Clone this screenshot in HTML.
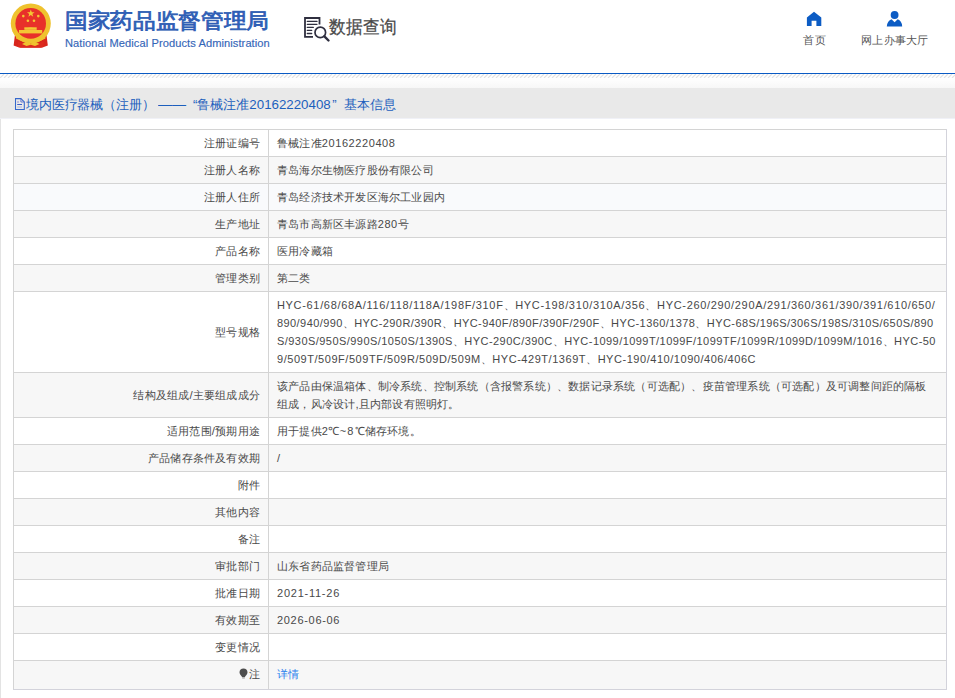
<!DOCTYPE html>
<html><head><meta charset="utf-8">
<style>
*{margin:0;padding:0;box-sizing:border-box}
html,body{width:955px;height:698px;overflow:hidden;background:#fff;font-family:"Liberation Sans",sans-serif;}
.abs{position:absolute;white-space:nowrap}
.emb{left:10px;top:3px;width:41px;height:45px}
.t1{left:65px;top:6px;font-size:21px;font-weight:500;color:#2e5eb5;letter-spacing:0;line-height:30px;-webkit-text-stroke:0.8px #2e5eb5;transform:scaleX(1.08);transform-origin:0 0}
.t2{left:65px;top:36px;font-size:11.1px;color:#3566b8;line-height:14px;letter-spacing:0.08px;-webkit-text-stroke:0.15px #3566b8}
.sq{left:300px;top:14px;width:32px;height:30px}
.sqt{left:329px;top:15px;font-size:17px;color:#4a4a4a;line-height:26px;transform:scaleY(1.08);transform-origin:0 50%;-webkit-text-stroke:0.25px #4a4a4a}
.navt{font-size:11.2px;color:#555;line-height:14px}
.bl{left:0;top:73px;width:955px;height:1px;background:#0b5bc4}
.grad{left:0;top:78px;width:955px;height:10px;background:linear-gradient(#fff,#f7f7f7)}
.bar{left:0;top:88px;width:955px;height:30px;background:#e9e9e9}
.barline{left:0;top:118px;width:955px;height:1px;background:#f0f1f7}
.bart{left:26px;top:96px;font-size:13px;color:#1c5fbd;line-height:18px}
.panel{left:0;top:119px;width:1px;height:579px;background:#e3e3e3}
table{position:absolute;left:13px;top:129px;width:934px;border-collapse:collapse;table-layout:fixed;font-size:11.4px;color:#494949;letter-spacing:0.2px}
td{border:1px solid #d4d4d4;padding:4px 0;line-height:18px;vertical-align:middle;white-space:nowrap;overflow:hidden}
td.l{text-align:right;padding-right:8px}
td.v{padding-left:8px}
tr:nth-child(even) td{background:#f7f7f7}
tr.hv td{background:#f9fafc}
.n{font-size:11px;letter-spacing:0.5px;color:#484848}
a{color:#2b82ee;text-decoration:none}
</style></head><body>
<svg class="abs" style="left:5px;top:0" width="50" height="50" viewBox="0 0 50 50">
  <path d="M10.5 31 L8.6 45.5 L14 47.6 L37.5 47.6 L42.8 45.5 L41 31 Z" fill="#d8261c"/>
  <circle cx="25.8" cy="23.6" r="20" fill="#efc22e"/>
  <circle cx="25.7" cy="23.4" r="15.3" fill="#e8302a"/>
  <polygon points="25.8,9.6 26.8,12.2 29.6,12.3 27.4,14 28.2,16.7 25.8,15.1 23.4,16.7 24.2,14 22,12.3 24.8,12.2" fill="#f4c634"/>
  <circle cx="18.3" cy="16.1" r="1.3" fill="#f4c634"/><circle cx="33.3" cy="16.1" r="1.3" fill="#f4c634"/>
  <circle cx="22.9" cy="20.8" r="1.3" fill="#f4c634"/><circle cx="29" cy="20.8" r="1.3" fill="#f4c634"/>
  <path d="M19.5 29.6 Q25.8 25.6 32 29.6 Z" fill="#f4c634"/>
  <rect x="19.3" y="27.3" width="12.4" height="2.4" fill="#f4c634"/>
  <rect x="14" y="30" width="23.2" height="3.4" fill="#f4c634"/>
  <path d="M11.5 35 Q25.8 44 40 35 L40.5 38.5 Q25.8 47 11 38.5 Z" fill="#efc22e"/>
  <path d="M13 41.5 Q25.8 48 38.5 41.5 L39 46.5 L36 47.8 L15.5 47.8 L12.5 46.5 Z" fill="#dc2a1e"/>
  <path d="M17 44 L22 41.5 L25.8 43.5 L29.5 41.5 L34.5 44 L30 46 L25.8 44.8 L21.5 46 Z" fill="#f0c22e"/>
</svg>
<div class="abs t1">国家药品监督管理局</div>
<div class="abs t2">National Medical Products Administration</div>
<svg class="abs" style="left:300px;top:12px" width="32" height="32" viewBox="0 0 32 32">
  <path d="M19.5 12.6 V6 H5 V24.9 H13" fill="none" stroke="#2f2f3f" stroke-width="1.8"/>
  <path d="M7.3 9.4 H17 M7.3 12.3 H17 M7.3 15.4 H13.3 M7.3 18.4 H11.7 M7.3 21.5 H11.7" stroke="#2f2f3f" stroke-width="1.3" stroke-linecap="round"/>
  <circle cx="20.3" cy="20.4" r="5.3" fill="#fff" stroke="#2f2f3f" stroke-width="1.7"/>
  <path d="M24.4 24.4 L28.5 28.5" stroke="#2f2f3f" stroke-width="2.4" stroke-linecap="round"/>
</svg>
<div class="abs sqt">数据查询</div>
<svg class="abs" style="left:806px;top:11px" width="16" height="16" viewBox="0 0 16 16"><path d="M8 0.8 L15.3 6.5 V15 H10.4 V9.8 H5.6 V15 H0.9 V6.5 Z" fill="#0c5cc4"/></svg>
<div class="abs navt" style="left:803px;top:33px;letter-spacing:0.9px">首页</div>
<svg class="abs" style="left:886px;top:10px" width="17" height="17" viewBox="0 0 17 17"><circle cx="8.6" cy="5" r="3.9" fill="#0c5cc4"/><path d="M0.8 16.4 Q1.5 10.5 5.5 9.3 L8.6 12.2 L11.7 9.3 Q15.7 10.5 16.2 16.4 Z" fill="#0c5cc4"/></svg>
<div class="abs navt" style="left:861px;top:33px;letter-spacing:0.25px">网上办事大厅</div>
<div class="abs bl"></div>
<svg class="abs" style="left:0;top:74px" width="955" height="4"><path d="M-4 4L0 0M0 4L4 0M4 4L8 0M8 4L12 0M12 4L16 0M16 4L20 0M20 4L24 0M24 4L28 0M28 4L32 0M32 4L36 0M36 4L40 0M40 4L44 0M44 4L48 0M48 4L52 0M52 4L56 0M56 4L60 0M60 4L64 0M64 4L68 0M68 4L72 0M72 4L76 0M76 4L80 0M80 4L84 0M84 4L88 0M88 4L92 0M92 4L96 0M96 4L100 0M100 4L104 0M104 4L108 0M108 4L112 0M112 4L116 0M116 4L120 0M120 4L124 0M124 4L128 0M128 4L132 0M132 4L136 0M136 4L140 0M140 4L144 0M144 4L148 0M148 4L152 0M152 4L156 0M156 4L160 0M160 4L164 0M164 4L168 0M168 4L172 0M172 4L176 0M176 4L180 0M180 4L184 0M184 4L188 0M188 4L192 0M192 4L196 0M196 4L200 0M200 4L204 0M204 4L208 0M208 4L212 0M212 4L216 0M216 4L220 0M220 4L224 0M224 4L228 0M228 4L232 0M232 4L236 0M236 4L240 0M240 4L244 0M244 4L248 0M248 4L252 0M252 4L256 0M256 4L260 0M260 4L264 0M264 4L268 0M268 4L272 0M272 4L276 0M276 4L280 0M280 4L284 0M284 4L288 0M288 4L292 0M292 4L296 0M296 4L300 0M300 4L304 0M304 4L308 0M308 4L312 0M312 4L316 0M316 4L320 0M320 4L324 0M324 4L328 0M328 4L332 0M332 4L336 0M336 4L340 0M340 4L344 0M344 4L348 0M348 4L352 0M352 4L356 0M356 4L360 0M360 4L364 0M364 4L368 0M368 4L372 0M372 4L376 0M376 4L380 0M380 4L384 0M384 4L388 0M388 4L392 0M392 4L396 0M396 4L400 0M400 4L404 0M404 4L408 0M408 4L412 0M412 4L416 0M416 4L420 0M420 4L424 0M424 4L428 0M428 4L432 0M432 4L436 0M436 4L440 0M440 4L444 0M444 4L448 0M448 4L452 0M452 4L456 0M456 4L460 0M460 4L464 0M464 4L468 0M468 4L472 0M472 4L476 0M476 4L480 0M480 4L484 0M484 4L488 0M488 4L492 0M492 4L496 0M496 4L500 0M500 4L504 0M504 4L508 0M508 4L512 0M512 4L516 0M516 4L520 0M520 4L524 0M524 4L528 0M528 4L532 0M532 4L536 0M536 4L540 0M540 4L544 0M544 4L548 0M548 4L552 0M552 4L556 0M556 4L560 0M560 4L564 0M564 4L568 0M568 4L572 0M572 4L576 0M576 4L580 0M580 4L584 0M584 4L588 0M588 4L592 0M592 4L596 0M596 4L600 0M600 4L604 0M604 4L608 0M608 4L612 0M612 4L616 0M616 4L620 0M620 4L624 0M624 4L628 0M628 4L632 0M632 4L636 0M636 4L640 0M640 4L644 0M644 4L648 0M648 4L652 0M652 4L656 0M656 4L660 0M660 4L664 0M664 4L668 0M668 4L672 0M672 4L676 0M676 4L680 0M680 4L684 0M684 4L688 0M688 4L692 0M692 4L696 0M696 4L700 0M700 4L704 0M704 4L708 0M708 4L712 0M712 4L716 0M716 4L720 0M720 4L724 0M724 4L728 0M728 4L732 0M732 4L736 0M736 4L740 0M740 4L744 0M744 4L748 0M748 4L752 0M752 4L756 0M756 4L760 0M760 4L764 0M764 4L768 0M768 4L772 0M772 4L776 0M776 4L780 0M780 4L784 0M784 4L788 0M788 4L792 0M792 4L796 0M796 4L800 0M800 4L804 0M804 4L808 0M808 4L812 0M812 4L816 0M816 4L820 0M820 4L824 0M824 4L828 0M828 4L832 0M832 4L836 0M836 4L840 0M840 4L844 0M844 4L848 0M848 4L852 0M852 4L856 0M856 4L860 0M860 4L864 0M864 4L868 0M868 4L872 0M872 4L876 0M876 4L880 0M880 4L884 0M884 4L888 0M888 4L892 0M892 4L896 0M896 4L900 0M900 4L904 0M904 4L908 0M908 4L912 0M912 4L916 0M916 4L920 0M920 4L924 0M924 4L928 0M928 4L932 0M932 4L936 0M936 4L940 0M940 4L944 0M944 4L948 0M948 4L952 0M952 4L956 0M956 4L960 0" stroke="#e2e2e2" stroke-width="1.15"/></svg>
<div class="abs grad"></div>
<div class="abs bar"></div>
<div class="abs barline"></div>
<svg class="abs" style="left:12px;top:95px" width="16" height="18" viewBox="0 0 16 18"><path d="M3.5 3.6 H8.9 L12.3 7 V14.4 H3.5 Z" fill="none" stroke="#3568cc" stroke-width="1.05"/><path d="M8.9 3.6 V7 H12.3" fill="none" stroke="#5a70cc" stroke-width="0.9"/><path d="M5.2 7 H6.8" stroke="#8078d0" stroke-width="1"/><path d="M5.2 9.5 H10" stroke="#3a5fc8" stroke-width="1"/><path d="M5.2 12 H10" stroke="#a9b3da" stroke-width="1"/></svg>
<div class="abs bart" style="left:26px;letter-spacing:-0.15px">境内医疗器械（注册）</div>
<div class="abs bart" style="left:158px;transform:scaleX(1.08);transform-origin:0 0">——</div>
<div class="abs bart" style="left:193px">“鲁械注准<span style="font-size:13.3px">20162220408</span><span style="margin-left:1.5px">”</span></div>
<div class="abs bart" style="left:344px">基本信息</div>
<div class="abs panel"></div>
<table>
<colgroup><col style="width:255px"><col></colgroup>
<tr><td class="l">注册证编号</td><td class="v">鲁械注准<span class="n" style="letter-spacing:0.58px">20162220408</span></td></tr>
<tr><td class="l">注册人名称</td><td class="v">青岛海尔生物医疗股份有限公司</td></tr>
<tr class="hv"><td class="l">注册人住所</td><td class="v">青岛经济技术开发区海尔工业园内</td></tr>
<tr><td class="l">生产地址</td><td class="v">青岛市高新区丰源路<span class="n">280</span>号</td></tr>
<tr><td class="l">产品名称</td><td class="v">医用冷藏箱</td></tr>
<tr><td class="l">管理类别</td><td class="v">第二类</td></tr>
<tr><td class="l">型号规格</td><td class="v"><span class="n" style="letter-spacing:0.67px">HYC-61/68/68A/116/118/118A/198F/310F、HYC-198/310/310A/356、HYC-260/290/290A/291/360/361/390/391/610/650/</span><br><span class="n" style="letter-spacing:0.42px">890/940/990、HYC-290R/390R、HYC-940F/890F/390F/290F、HYC-1360/1378、HYC-68S/196S/306S/198S/310S/650S/890</span><br><span class="n" style="letter-spacing:0.45px">S/930S/950S/990S/1050S/1390S、HYC-290C/390C、HYC-1099/1099T/1099F/1099TF/1099R/1099D/1099M/1016、HYC-50</span><br><span class="n" style="letter-spacing:0.54px">9/509T/509F/509TF/509R/509D/509M、HYC-429T/1369T、HYC-190/410/1090/406/406C</span></td></tr>
<tr><td class="l">结构及组成/主要组成成分</td><td class="v">该产品由保温箱体、制冷系统、控制系统（含报警系统）、数据记录系统（可选配）、疫苗管理系统（可选配）及可调整间距的隔板<br>组成，风冷设计,且内部设有照明灯。</td></tr>
<tr><td class="l">适用范围/预期用途</td><td class="v">用于提供<span class="n">2</span>℃<span class="n" style="letter-spacing:1.2px">~8</span>℃储存环境。</td></tr>
<tr><td class="l">产品储存条件及有效期</td><td class="v"><span class="n">/</span></td></tr>
<tr><td class="l">附件</td><td class="v"></td></tr>
<tr><td class="l">其他内容</td><td class="v"></td></tr>
<tr><td class="l">备注</td><td class="v"></td></tr>
<tr><td class="l">审批部门</td><td class="v">山东省药品监督管理局</td></tr>
<tr><td class="l">批准日期</td><td class="v"><span class="n" style="letter-spacing:0.76px">2021-11-26</span></td></tr>
<tr><td class="l">有效期至</td><td class="v"><span class="n" style="letter-spacing:0.69px">2026-06-06</span></td></tr>
<tr><td class="l">变更情况</td><td class="v"></td></tr>
<tr><td class="l" style="padding-bottom:6px"><svg width="9" height="11" viewBox="0 0 9 11" style="vertical-align:-1px;margin-right:1px"><path d="M4.5 0.4 C6.9 0.4 8.5 2.1 8.5 4.3 C8.5 6.3 6.6 7.7 5.8 9.2 L3.2 9.2 C2.4 7.7 0.5 6.3 0.5 4.3 C0.5 2.1 2.1 0.4 4.5 0.4 Z" fill="#4d4d4d"/><rect x="3.2" y="9.6" width="2.6" height="0.9" fill="#9a9a9a"/></svg>注</td><td class="v" style="padding-bottom:6px"><a>详情</a></td></tr>
</table>
<div class="abs" style="left:946px;top:129px;width:1px;height:561px;background:#d3d3db"></div>
<div class="abs" style="left:13px;top:689px;width:934px;height:1px;background:#d3d3db"></div>
</body></html>
